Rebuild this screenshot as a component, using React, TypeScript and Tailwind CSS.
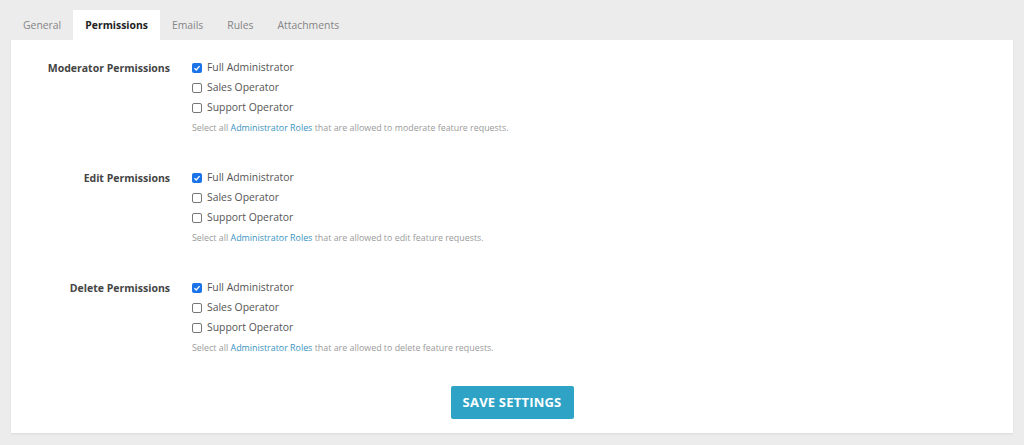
import React from "react";

const font = { fontFamily: '"Open Sans", "Noto Sans", sans-serif' };

const tabs = ["General", "Permissions", "Emails", "Rules", "Attachments"];
const roles = ["Full Administrator", "Sales Operator", "Support Operator"];

const sections = [
  { label: "Moderator Permissions", verb: "moderate" },
  { label: "Edit Permissions", verb: "edit" },
  { label: "Delete Permissions", verb: "delete" },
];

function Box({ checked }: { checked: boolean }) {
  if (checked) {
    return (
      <span className="flex h-[10px] w-[10px] items-center justify-center rounded-[2px] bg-[#1a73e8]">
        <svg viewBox="0 0 10 10" className="h-[8px] w-[8px]">
          <path d="M1.8 5.2 L4.1 7.4 L8.2 2.6" fill="none" stroke="#fff" strokeWidth="1.7" />
        </svg>
      </span>
    );
  }
  return <span className="h-[10px] w-[10px] rounded-[2px] border border-[#767676] bg-white" />;
}

export default function App() {
  return (
    <div className="min-h-[445px] bg-[#ececec] px-[11px] pt-[10px]" style={font}>
      <div className="flex text-[10.4px] leading-[30px]">
        {tabs.map((t) => (
          <div
            key={t}
            className={
              t === "Permissions"
                ? "bg-white px-3 font-bold text-[#222]"
                : "px-3 text-[#858585]"
            }
          >
            {t}
          </div>
        ))}
      </div>
      <div className="h-[393px] bg-white pt-[18px] shadow-[0_1px_2px_rgba(0,0,0,0.08)]">
        {sections.map((s) => (
          <div key={s.label} className="mb-[30px] flex">
            <div className="w-[159px] text-right text-[10.5px] font-bold leading-[20px] text-[#444]">
              {s.label}
            </div>
            <div className="ml-[22px]">
              {roles.map((r, i) => (
                <div key={r} className="flex h-[20px] items-center gap-[5px] text-[10.4px] text-[#555]">
                  <Box checked={i === 0} />
                  <span>{r}</span>
                </div>
              ))}
              <div className="text-[8.9px] leading-[20px] text-[#9a9a9a]">
                Select all <span className="text-[#3a93c0]">Administrator Roles</span> that are allowed
                to {s.verb} feature requests.
              </div>
            </div>
          </div>
        ))}
        <div className="-mt-[2px] flex justify-center">
          <button className="h-[33px] w-[123px] rounded-[2px] bg-[#2ea3c6] text-[13px] font-bold uppercase tracking-[0.2px] text-white">
            Save Settings
          </button>
        </div>
      </div>
    </div>
  );
}
